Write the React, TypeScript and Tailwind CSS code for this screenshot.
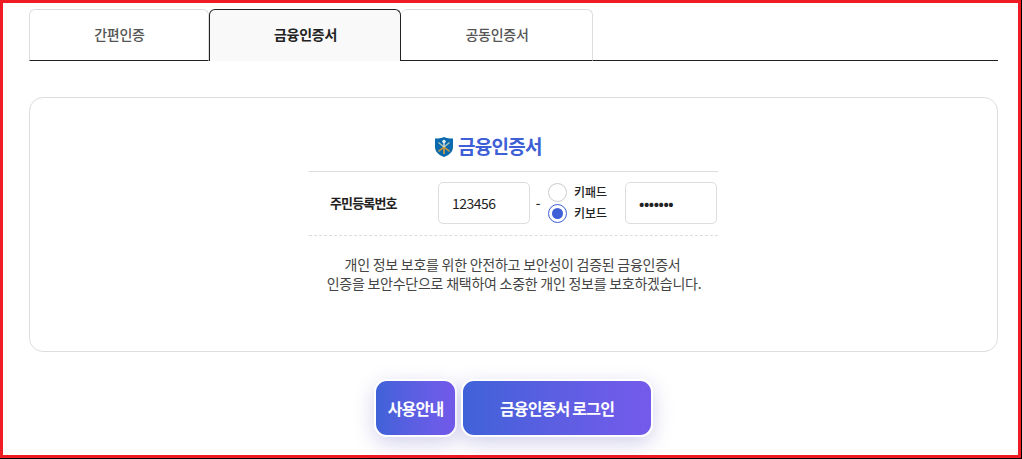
import { useState } from 'react'
import clsx from 'clsx'

const TABS = [
  { id: 'simple', label: '간편인증', width: 'w-[180px]' },
  { id: 'finance', label: '금융인증서', width: 'w-[192px]' },
  { id: 'joint', label: '공동인증서', width: 'w-[192px]' },
]

const INPUT_METHODS = [
  { id: 'keypad', label: '키패드' },
  { id: 'keyboard', label: '키보드' },
]

function ShieldLogo() {
  return (
    <svg width="18" height="20" viewBox="0 0 18 20" fill="none">
      <path d="M9 0C6.5 1.1 3.4 1.5 0 1.5V10c0 5.2 4.4 8.3 9 10 4.6-1.7 9-4.8 9-10V1.5C14.6 1.5 11.5 1.1 9 0Z" fill="#0b69ad" />
      <path d="m3.5 5.5 5.5 4.5 5.5-4.5" stroke="#a9c3b4" strokeWidth="1.4" />
      <path d="m9 10-5.5 4.3M9 10l5.5 4.3" stroke="#d09a3e" strokeWidth="1.5" />
      <path d="M9 9v8" stroke="#d09a3e" strokeWidth="1.7" />
      <circle cx="9" cy="4.5" r="1.7" fill="#e3eef0" />
      <path d="M9 5.5V10" stroke="#e3eef0" strokeWidth="1.3" />
    </svg>
  )
}

function GradientButton({ label, className }: { label: string; className: string }) {
  return (
    <button
      type="button"
      className={clsx(
        'h-[58px] rounded-[13px] border-2 border-white bg-linear-to-r from-[#3e62d8] to-[#755aec] bg-origin-border pb-px text-[16px] font-bold tracking-[-0.8px] whitespace-nowrap text-white shadow-[0_6px_20px_rgba(80,70,180,0.25)]',
        className,
      )}
    >
      {label}
    </button>
  )
}

export default function App() {
  const [tab, setTab] = useState('finance')
  const [method, setMethod] = useState('keyboard')

  return (
    <div className="h-[459px] w-[1022px] overflow-hidden border-r border-b border-black bg-white font-['Noto_Sans_CJK_KR','Noto_Sans',sans-serif] text-[#222]">
      <div className="h-full border-[3px] border-[#f01c24] pt-1.5 pr-5 pl-[26px]">
        {/* Tabs */}
        <div className="flex h-[52px]">
          {TABS.map((t) => (
            <button
              key={t.id}
              type="button"
              onClick={() => setTab(t.id)}
              className={clsx(
                'rounded-t-[6px] border pb-0.5 pl-px text-[14px] tracking-[-0.25px]',
                t.width,
                tab === t.id
                  ? 'border-[#222] border-b-0 bg-[#f9f9f9] font-bold text-[#222]'
                  : 'border-[#ddd] border-b-[#222] font-medium text-[#555]',
                t.id === 'joint' && 'border-l-0',
              )}
            >
              {t.label}
            </button>
          ))}
          <div className="flex-1 border-b border-[#222]" />
        </div>

        {/* Certificate form */}
        <div className="mt-9 h-[255px] rounded-[14px] border border-[#ddd] pt-[34px]">
          <div className="ml-[279px] w-[409px]">
            <h2 className="flex h-10 items-start gap-[5px] border-b border-[#ddd] pt-[5px] pl-[126px] text-[19px] font-bold tracking-[-0.7px] text-[#3e5fd6]">
              <ShieldLogo />
              <span className="leading-[18px]">금융인증서</span>
            </h2>
            <div className="flex h-16 items-center border-b border-dashed border-[#ddd] pb-px text-[12px] font-medium">
              <span className="w-[129px] pl-[21px] text-[13px] font-bold tracking-[-0.85px]">주민등록번호</span>
              <input
                defaultValue="123456"
                className="h-[42px] w-[92px] rounded-[5px] border border-[#ddd] px-[13px] text-[14px] font-normal tracking-[-0.5px] outline-none"
              />
              <span className="w-[18px] pr-0.5 text-center text-[13px]">-</span>
              <div className="flex w-[77px] flex-col gap-[2px]">
                {INPUT_METHODS.map((m) => (
                  <label key={m.id} className="flex h-[19px] items-center gap-[7px]">
                    <input type="radio" name="method" className="sr-only" checked={method === m.id} onChange={() => setMethod(m.id)} />
                    <span className={clsx('grid size-[19px] place-items-center rounded-full border', method === m.id ? 'border-[#3e5fd6]' : 'border-[#ccc]')}>
                      {method === m.id && <span className="size-[11px] rounded-full bg-[#3e5fd6]" />}
                    </span>
                    <span className="pb-0.5">{m.label}</span>
                  </label>
                ))}
              </div>
              <input
                type="password"
                defaultValue="1234567"
                className="h-[42px] w-[92px] rounded-[5px] border border-[#ddd] px-[13px] text-[14px] font-bold tracking-[-0.4px] outline-none"
              />
            </div>
            <p className="mt-[19px] text-center text-[14px] leading-[19px] tracking-[-0.25px] text-[#444]">
              <span className="pr-0.5">개인 정보 보호를 위한 안전하고 보안성이 검증된 금융인증서</span>
              <br />
              <span className="pl-px">인증을 보안수단으로 채택하여 소중한 개인 정보를 보호하겠습니다.</span>
            </p>
          </div>
        </div>

        {/* Actions */}
        <div className="mt-[27px] flex justify-center gap-1">
          <GradientButton label="사용안내" className="w-[83px]" />
          <GradientButton label="금융인증서 로그인" className="w-48" />
        </div>
      </div>
    </div>
  )
}
